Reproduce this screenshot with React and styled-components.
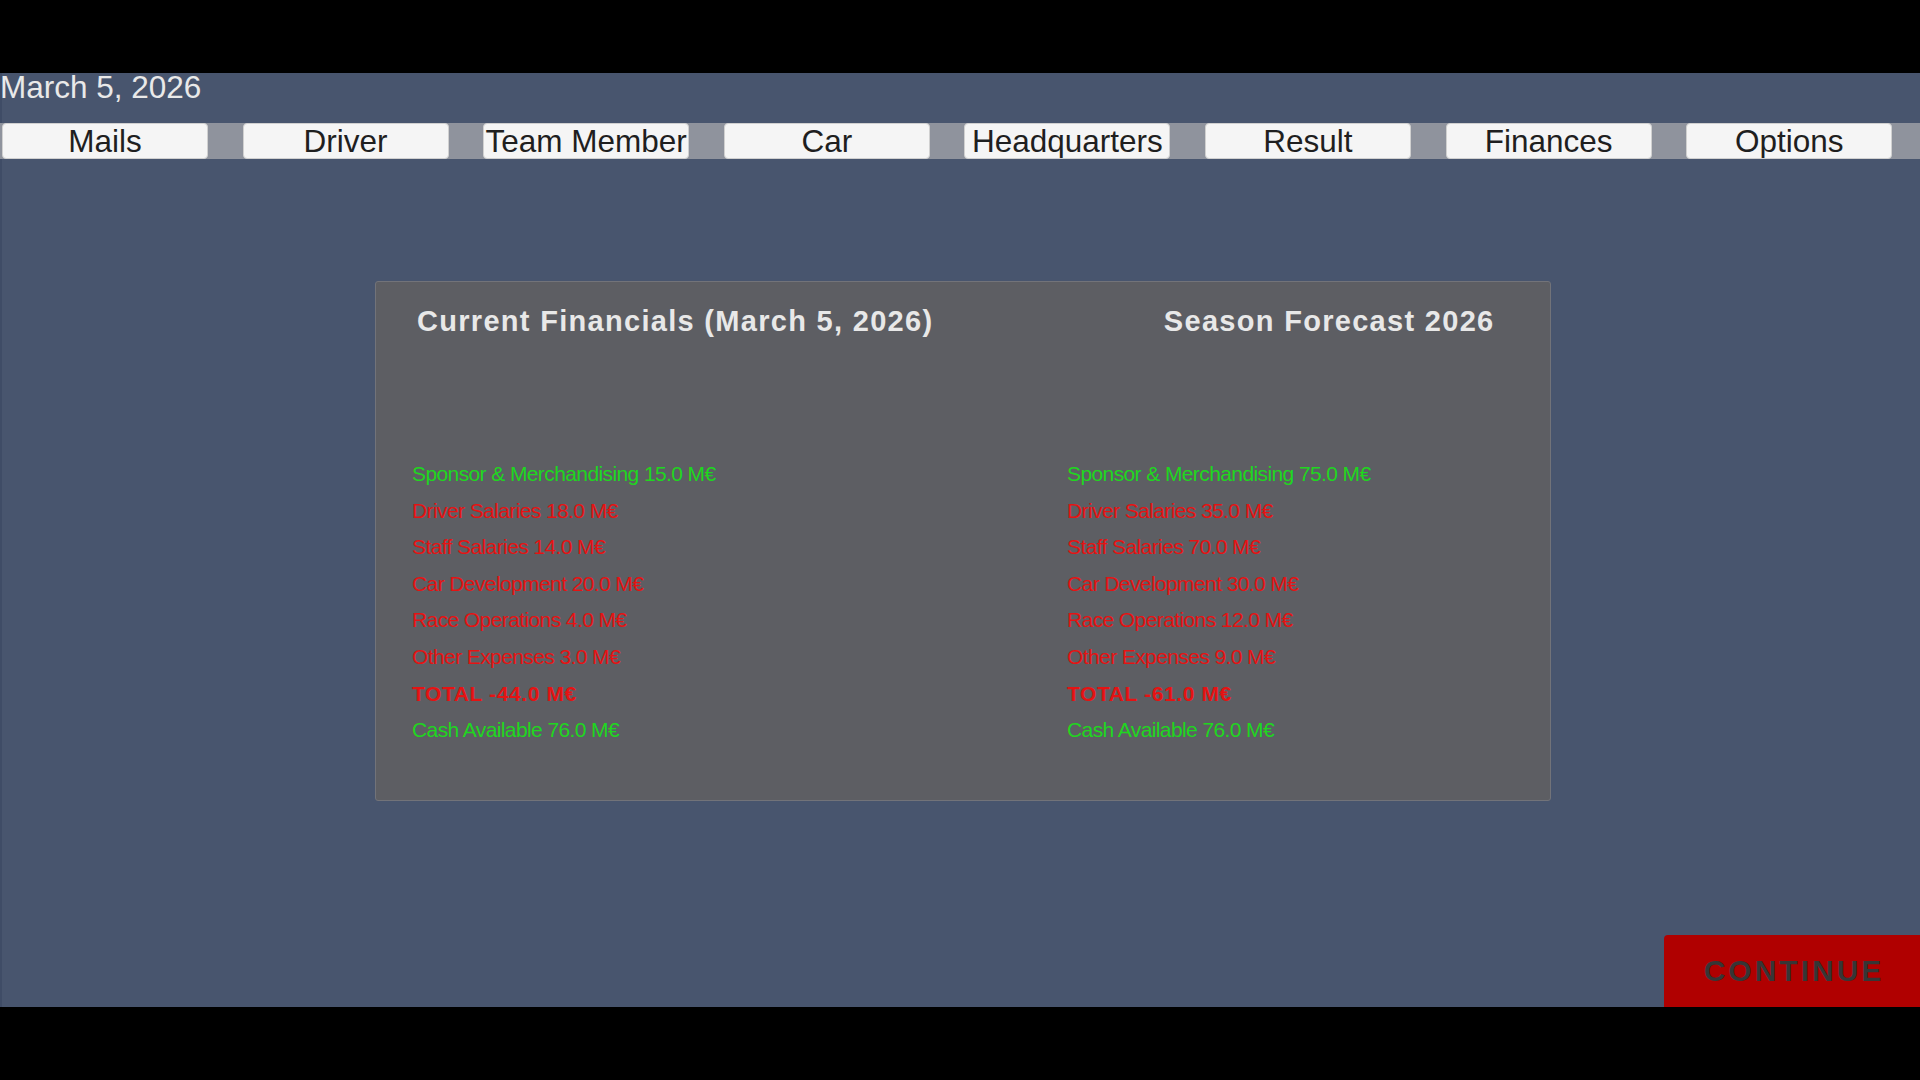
import React from "react";
import styled, { createGlobalStyle } from "styled-components";

const Global = createGlobalStyle`
  html, body { margin: 0; padding: 0; background: #000; }
  body { font-family: "Liberation Sans", Arial, sans-serif; }
  * { box-sizing: border-box; }
`;

const Screen = styled.div`
  width: 1920px;
  height: 1080px;
  background: #000;
  padding: 73px 0;
  overflow: hidden;
`;

const Stage = styled.div`
  height: 934px;
  background: #48556e;
  border-left: 2px solid #3f4c66;
  display: flex;
  flex-direction: column;
  position: relative;
`;

const DateLabel = styled.div`
  font-size: 31.5px;
  line-height: 28px;
  color: #e9e9e9;
  margin-left: -2px;
`;

const TabBar = styled.nav`
  margin-top: 22px;
  margin-left: -2px;
  height: 36px;
  background: #8f939d;
  display: flex;
  gap: 34.6px;
  padding-left: 2px;
`;

const Tab = styled.button`
  width: 206px;
  height: 36px;
  flex: none;
  padding: 0;
  background: #f5f5f5;
  border: 1px solid #d0d0d0;
  border-radius: 4px;
  font-family: "Liberation Sans", Arial, sans-serif;
  font-size: 31.5px;
  line-height: 34px;
  color: #1f1f1f;
  white-space: nowrap;
  overflow: hidden;
  cursor: pointer;
`;

const Center = styled.div`
  display: flex;
  justify-content: center;
  padding-left: 3px;
  margin-top: 122px;
`;

const Panel = styled.section`
  width: 1176px;
  height: 520px;
  background: #5d5e63;
  border: 1px solid #727379;
  border-radius: 3px;
  padding: 22px 55px 0 36.5px;
`;

const HeaderRow = styled.div`
  display: flex;
  justify-content: space-between;
  padding-left: 5px;
`;

const Heading = styled.h2`
  margin: 0;
  font-size: 29px;
  line-height: 34px;
  font-weight: 700;
  letter-spacing: 1.3px;
  color: #e8e8e8;
`;

const Columns = styled.div`
  display: grid;
  grid-template-columns: 655px 1fr;
  margin-top: 118px;
`;

const Column = styled.div`
  display: flex;
  flex-direction: column;
`;

const Line = styled.div`
  font-size: 21px;
  line-height: 36.6px;
  height: 36.6px;
  white-space: nowrap;
  letter-spacing: ${(p) => (p.$bold ? "0.6px" : "-0.6px")};
  font-weight: ${(p) => (p.$bold ? 700 : 400)};
  color: ${(p) => (p.$tone === "gain" ? "#20d620" : "#e51313")};
`;

const Footer = styled.div`
  margin-top: auto;
  display: flex;
  justify-content: flex-end;
`;

const ContinueButton = styled.button`
  width: 256px;
  height: 72px;
  background: #b00000;
  border: none;
  border-radius: 4px 0 0 0;
  font-family: "Liberation Sans", Arial, sans-serif;
  font-weight: 700;
  font-size: 30px;
  letter-spacing: 3px;
  color: #363636;
  padding: 0 0 0 4px;
  cursor: pointer;
`;

const tabs = ["Mails", "Driver", "Team Member", "Car", "Headquarters", "Result", "Finances", "Options"];

const current = [
  { t: "Sponsor & Merchandising 15.0 M€", tone: "gain" },
  { t: "Driver Salaries 18.0 M€" },
  { t: "Staff Salaries 14.0 M€" },
  { t: "Car Development 20.0 M€" },
  { t: "Race Operations 4.0 M€" },
  { t: "Other Expenses 3.0 M€" },
  { t: "TOTAL -44.0 M€", bold: true },
  { t: "Cash Available 76.0 M€", tone: "gain" },
];

const forecast = [
  { t: "Sponsor & Merchandising 75.0 M€", tone: "gain" },
  { t: "Driver Salaries 35.0 M€" },
  { t: "Staff Salaries 70.0 M€" },
  { t: "Car Development 30.0 M€" },
  { t: "Race Operations 12.0 M€" },
  { t: "Other Expenses 9.0 M€" },
  { t: "TOTAL -61.0 M€", bold: true },
  { t: "Cash Available 76.0 M€", tone: "gain" },
];

function FinanceColumn({ rows }) {
  return (
    <Column>
      {rows.map((r, i) => (
        <Line key={i} $tone={r.tone} $bold={r.bold}>
          {r.t}
        </Line>
      ))}
    </Column>
  );
}

export default function App() {
  return (
    <>
      <Global />
      <Screen>
        <Stage>
          <DateLabel>March 5, 2026</DateLabel>
          <TabBar>
            {tabs.map((t) => (
              <Tab key={t}>{t}</Tab>
            ))}
          </TabBar>
          <Center>
            <Panel>
              <HeaderRow>
                <Heading>Current Financials (March 5, 2026)</Heading>
                <Heading>Season Forecast 2026</Heading>
              </HeaderRow>
              <Columns>
                <FinanceColumn rows={current} />
                <FinanceColumn rows={forecast} />
              </Columns>
            </Panel>
          </Center>
          <Footer>
            <ContinueButton>CONTINUE</ContinueButton>
          </Footer>
        </Stage>
      </Screen>
    </>
  );
}
